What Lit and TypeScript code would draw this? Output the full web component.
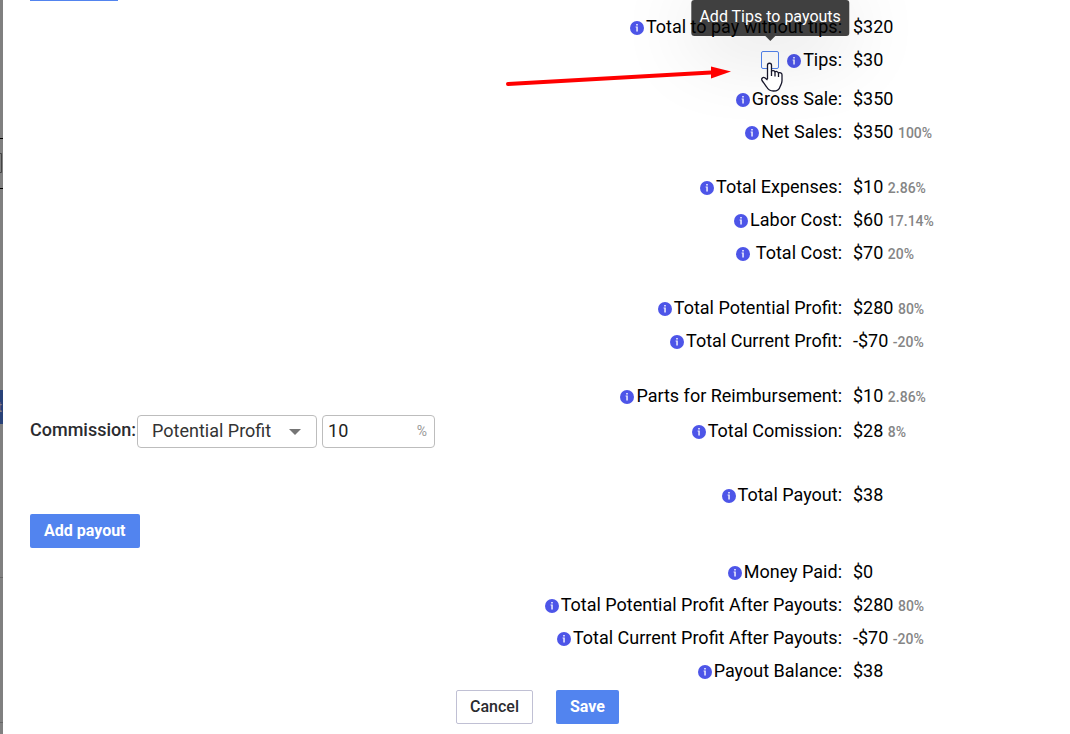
import { LitElement, html, css, svg, nothing } from "lit";
import { customElement, property } from "lit/decorators.js";
import { classMap } from "lit/directives/class-map.js";

interface Line {
  label: string;
  value: string;
  share?: string;
  spaced?: boolean;
}

const infoIcon = html`<svg class="info" viewBox="0 0 14 14" aria-hidden="true">
  <circle cx="7" cy="7" r="7" fill="#4d55e8"></circle>
  <path d="M6.200 3h1.600v1.500H6.200zM5.600 5.500h2.200v5H6.300V6.500h-.7z" fill="#fff" opacity=".9"></path>
</svg>`;

@customElement("summary-line")
export class SummaryLine extends LitElement {
  @property({ attribute: false }) line!: Line;

  static styles = css`
    :host {
      display: grid;
      grid-template-columns: 1fr 217px;
      column-gap: 11px;
      min-height: 33px;
      padding-top: 4px;
      box-sizing: border-box;
      align-items: start;
      font: 400 18px/24px Roboto, sans-serif;
      color: #000;
    }
    .label {
      display: flex;
      justify-content: flex-end;
      align-items: center;
      white-space: nowrap;
    }
    .info {
      width: 14px;
      height: 14px;
      margin: 2px 2px 0 0;
      flex: none;
    }
    .spaced .info {
      margin-right: 6px;
    }
    .value {
      height: 24px;
    }
    .share {
      font-size: 14px;
      font-weight: 500;
      color: #858585;
    }
  `;

  render() {
    const { label, value, share, spaced } = this.line;
    return html`
      <div class=${classMap({ label: true, spaced: !!spaced })}>
        <slot></slot>${infoIcon}<span>${label}</span>
      </div>
      <div class="value">${value}${share ? html` <span class="share">${share}</span>` : nothing}</div>
    `;
  }
}

@customElement("app-root")
export class AppRoot extends LitElement {
  static styles = css`
    * {
      box-sizing: border-box;
    }
    :host {
      display: flex;
      min-height: 100vh;
      overflow: hidden;
      background: #fff;
      font-family: Roboto, sans-serif;
    }
    .backdrop {
      width: 3px;
      flex: none;
      overflow: hidden;
      background: #808080;
    }
    .backdrop svg {
      display: block;
    }
    .dialog {
      flex: 1;
      min-width: 0;
      display: flex;
      flex-direction: column;
    }
    .edge {
      width: 88px;
      height: 1px;
      margin: 0 0 10px 27px;
      background: #5284ef;
    }
    .group {
      margin-bottom: 22px;
    }
    .tips {
      height: 39px;
    }
    .mark {
      position: relative;
      width: 18px;
      height: 18px;
      margin-right: 8px;
    }
    .tick {
      appearance: none;
      display: block;
      width: 18px;
      height: 18px;
      margin: 0;
      border: 1px solid #5284ef;
      border-radius: 2px;
      background: transparent;
      cursor: pointer;
    }
    .tooltip {
      position: absolute;
      bottom: 33px;
      left: 50%;
      transform: translateX(-50%);
      padding: 5px 8px 7px;
      border-radius: 3px;
      background: rgba(0, 0, 0, 0.75);
      box-shadow: 0 10px 80px rgba(0, 0, 0, 0.16);
      color: #fff;
      font: 400 16px/24px Roboto, sans-serif;
      white-space: nowrap;
    }
    .tooltip::after {
      content: "";
      position: absolute;
      top: 100%;
      left: 50%;
      margin-left: -5px;
      border: 5px solid transparent;
      border-top-color: #404040;
      border-bottom-width: 0;
    }
    .hand {
      position: absolute;
      left: 0;
      top: 11px;
      width: 22px;
      height: 30px;
    }
    .arrow {
      position: absolute;
      right: 48px;
      top: 14px;
      width: 226px;
      height: 22px;
    }
    .split {
      display: grid;
      grid-template-columns: auto 1fr;
      align-items: center;
      padding-left: 27px;
      min-height: 36px;
      margin-bottom: 30px;
    }
    .commission {
      display: flex;
      align-items: center;
      color: #2b2b2f;
      font-size: 18px;
      line-height: 24px;
    }
    .commission label {
      font-weight: 500;
      margin-right: 1px;
      padding-bottom: 2px;
    }
    .pick {
      position: relative;
      margin-right: 5px;
    }
    .pick select,
    .amount {
      height: 33px;
      border: 1px solid #bdbdbd;
      border-radius: 4px;
      background: #fff;
      color: #333;
      font: 400 18px/24px Roboto, sans-serif;
    }
    .pick select {
      appearance: none;
      display: block;
      width: 180px;
      padding: 0 30px 0 14px;
    }
    .pick svg {
      position: absolute;
      right: 16px;
      top: 14px;
      width: 12px;
      height: 6px;
      pointer-events: none;
    }
    .amount {
      display: flex;
      align-items: center;
      width: 113px;
      padding: 0 7px 0 5px;
    }
    .amount input {
      flex: 1;
      min-width: 0;
      padding: 0;
      border: 0;
      outline: 0;
      background: none;
      color: #222;
      font: inherit;
    }
    .amount span {
      color: #999;
      font-size: 14px;
    }
    .btn {
      height: 34px;
      padding: 0 14px;
      border: 0;
      border-radius: 2px;
      background: #5284ef;
      color: #fff;
      font: 700 16px/24px Roboto, sans-serif;
    }
    .add {
      margin: 2px 0 8px 27px;
      align-self: flex-start;
    }
    .plain {
      padding: 0 13px;
      border: 1px solid #c0c0d4;
      background: #fff;
      color: #2b2b2f;
      font-weight: 500;
    }
    .actions {
      display: flex;
      justify-content: center;
      gap: 23px;
      padding: 2px 0 10px 2px;
    }
  `;

  private rows(lines: Line[]) {
    return lines.map((line) => html`<summary-line .line=${line}></summary-line>`);
  }

  private backdrop() {
    return svg`<svg width="3" height="734" viewBox="0 0 3 734" aria-hidden="true">
      <path d="M0 138.5h3M0 188.5h3" stroke="#000"></path>
      <path d="M0 153.5h1.5v19H0" stroke="#444" fill="none"></path>
      <path d="M0 390h3v34H0z" fill="#294278"></path>
      <text x="-3" y="412" font-size="15" font-weight="500" fill="#808080">t</text>
      <path d="M0 577.5h3M0 722.5h3" stroke="#666"></path>
    </svg>`;
  }

  render() {
    return html`
      <div class="backdrop">${this.backdrop()}</div>
      <main class="dialog">
        <div class="edge"></div>
        <section class="group">
          ${this.rows([{ label: "Total to pay without tips:", value: "$320" }])}
          <div class="tips">
            <summary-line .line=${{ label: "Tips:", value: "$30" }}>
              <div class="mark">
                <input class="tick" type="checkbox" aria-label="Add Tips to payouts" />
                <div class="tooltip" role="tooltip">Add Tips to payouts</div>
                <svg class="arrow" viewBox="0 0 226 22" aria-hidden="true">
                  <path d="M3 19L206 7.5" stroke="#f00" stroke-width="4" stroke-linecap="round"></path>
                  <path d="M206 1.500l20 5-20 7z" fill="#f00"></path>
                </svg>
                <svg class="hand" viewBox="0 0 22 30" aria-hidden="true">
                  <path
                    d="M6.500 17V3.200c0-2.600 4-2.600 4 0v6c.8-1 3-.8 3.400.6 1.200-.8 3-.3 3.400 1 1.600-.6 3.700.2 3.700 2v6c0 3-1.500 4.500-2 6-.7 2.800-3 4.200-6.500 4.200-4 0-5.500-1.500-7-4.200L1 18.500c-1-2 1-3.800 2.800-2.700L6.500 18"
                    fill="#fff" stroke="#16162a" stroke-width="1.300" stroke-linejoin="round"></path>
                  <path d="M10.500 9v5M14 10v4.500M17.500 11v4" stroke="#16162a" stroke-width="1.300"></path>
                </svg>
              </div>
            </summary-line>
          </div>
          ${this.rows([
            { label: "Gross Sale:", value: "$350" },
            { label: "Net Sales:", value: "$350", share: "100%" },
          ])}
        </section>
        <section class="group">
          ${this.rows([
            { label: "Total Expenses:", value: "$10", share: "2.86%" },
            { label: "Labor Cost:", value: "$60", share: "17.14%" },
            { label: "Total Cost:", value: "$70", share: "20%", spaced: true },
          ])}
        </section>
        <section class="group">
          ${this.rows([
            { label: "Total Potential Profit:", value: "$280", share: "80%" },
            { label: "Total Current Profit:", value: "-$70", share: "-20%" },
          ])}
        </section>
        ${this.rows([{ label: "Parts for Reimbursement:", value: "$10", share: "2.86%" }])}
        <div class="split">
          <div class="commission">
            <label for="basis">Commission:</label>
            <div class="pick">
              <select id="basis">
                <option>Potential Profit</option>
              </select>
              <svg viewBox="0 0 12 6" aria-hidden="true"><path d="M0 0h12L6 6z" fill="#757575"></path></svg>
            </div>
            <div class="amount">
              <input type="text" .value=${"10"} aria-label="Commission percent" /><span>%</span>
            </div>
          </div>
          ${this.rows([{ label: "Total Comission:", value: "$28", share: "8%" }])}
        </div>
        ${this.rows([{ label: "Total Payout:", value: "$38" }])}
        <button class="btn add" type="button">Add payout</button>
        <section>
          ${this.rows([
            { label: "Money Paid:", value: "$0" },
            { label: "Total Potential Profit After Payouts:", value: "$280", share: "80%" },
            { label: "Total Current Profit After Payouts:", value: "-$70", share: "-20%" },
            { label: "Payout Balance:", value: "$38" },
          ])}
        </section>
        <div class="actions">
          <button class="btn plain" type="button">Cancel</button>
          <button class="btn" type="button">Save</button>
        </div>
      </main>
    `;
  }
}
